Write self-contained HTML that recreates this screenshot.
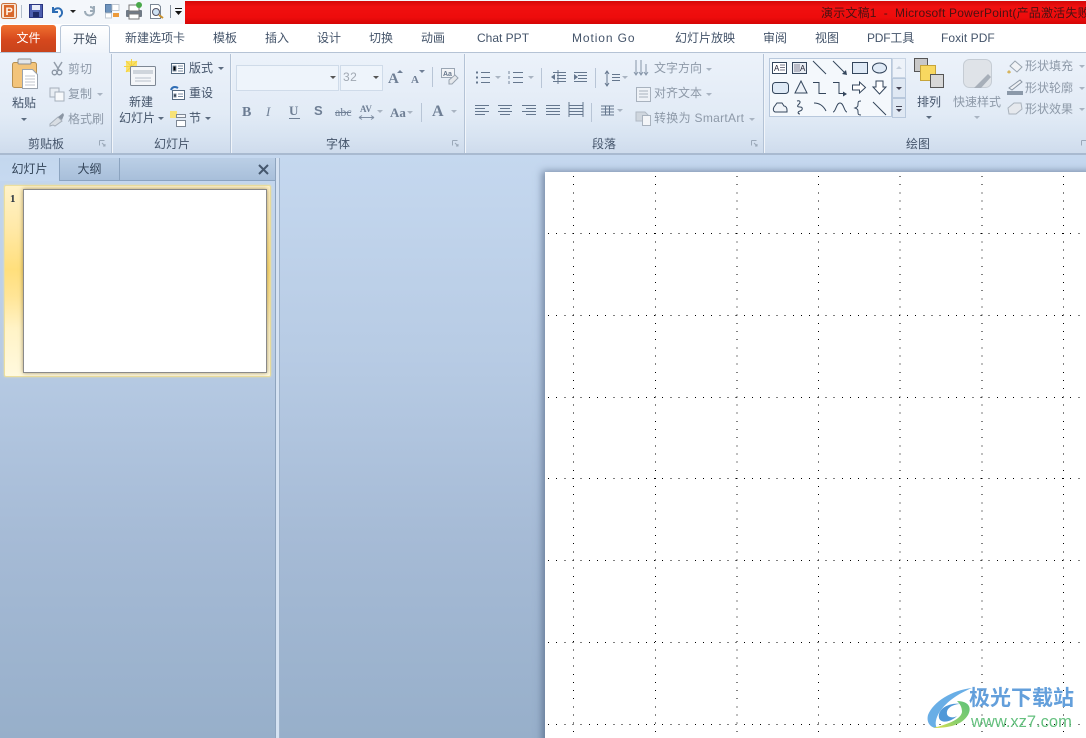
<!DOCTYPE html>
<html><head><meta charset="utf-8"><style>
html,body{margin:0;padding:0;width:1086px;height:738px;overflow:hidden;background:#fff}
body{position:relative;font-family:"Liberation Sans","Noto Sans CJK SC",sans-serif;font-size:12px;color:#3c4a5c}
.a{position:absolute}
.t{position:absolute;white-space:nowrap;line-height:16px;height:16px}
.tab{position:absolute;top:30px;white-space:nowrap;line-height:16px;color:#44546a;font-size:12px}
.g{color:#8d99a8}
.d{color:#44546a}
.sep{position:absolute;top:54px;height:99px;width:1px;background:#b4c3d6;box-shadow:1px 0 0 #f1f5fa}
.gl{position:absolute;top:136px;line-height:16px;color:#44546a;font-size:12px;white-space:nowrap}
.ar{position:absolute;width:0;height:0;border-left:3px solid transparent;border-right:3px solid transparent;border-top:3px solid #5c6c80}
.ar.l{border-top-color:#a9b4c2}
svg{position:absolute;overflow:visible}
</style></head><body>
<!-- quick access -->
<div class="a" style="left:0;top:0;width:1086px;height:24px;background:#f4f7fb"></div>
<div class="a" style="left:185px;top:1px;width:901px;height:23px;background:linear-gradient(#d40808 0,#f01010 25%,#ee0c0c 70%,#d50606 100%)"></div>
<div class="t" style="left:821px;top:5px;color:#4a1212;font-size:12px;letter-spacing:.2px">演示文稿1 &nbsp;-&nbsp; Microsoft PowerPoint(产品激活失败)</div>
<svg style="left:0;top:0" width="185" height="24">
<rect x="1.5" y="3.5" width="15" height="15" rx="2" fill="#f8e3d2" stroke="#c9703c"/><rect x="4" y="5" width="10" height="12" fill="#d9682c"/>
<text x="5.5" y="15" font-family="Liberation Sans" font-weight="bold" font-size="11" fill="#fff3e6">P</text>
<line x1="21.5" y1="5" x2="21.5" y2="18" stroke="#b4bfcc"/>
<rect x="29.5" y="4.5" width="13" height="13" fill="#4d5fb0" stroke="#2a3580"/><rect x="32" y="5" width="8" height="5" fill="#e8ecf8"/><rect x="33" y="12" width="6" height="5" fill="#1e2a68"/>
<path d="M53 7v5h5M53 12c2-5 8-5 9 0c.4 2-1 4-3 5" fill="none" stroke="#2c6cb4" stroke-width="2"/>
<path d="M70 10h6l-3 3z" fill="#222"/>
<path d="M94 6v5h-4M85 11c0 6 9 6 9 0c0-3-2-4-4-4" fill="none" stroke="#9cabb8" stroke-width="2"/>
<rect x="105.5" y="4.5" width="6" height="8" fill="#6d93bd" stroke="#5577a0"/><rect x="105.5" y="13" width="6" height="5" fill="#fff" stroke="#c0c8d2"/><rect x="112" y="4.500" width="7" height="6" fill="#fff" stroke="#c0c8d2"/><rect x="113" y="13" width="6" height="4" fill="#ec9a3a"/>
<rect x="126" y="10" width="16" height="7" rx="1" fill="#707a86"/><rect x="129" y="5" width="10" height="6" fill="#fff" stroke="#777"/><rect x="129" y="14" width="10" height="5" fill="#fff" stroke="#777"/><circle cx="139" cy="5" r="3" fill="#4aa84a"/>
<path d="M150.500 4.500h8l2 2v12h-10z" fill="#fff" stroke="#7a8694"/><circle cx="156" cy="12" r="3.500" fill="#cfe2f3" stroke="#556"/><line x1="159" y1="15" x2="163" y2="18" stroke="#c8912e" stroke-width="2"/>
<line x1="170.500" y1="5" x2="170.500" y2="18" stroke="#8894a2"/>
<rect x="175" y="8" width="7" height="1" fill="#111"/><path d="M175 11h7l-3.500 4z" fill="#111"/>
</svg>
<!-- tab row -->
<div class="a" style="left:0;top:24px;width:1086px;height:28px;background:#fff"></div>
<div class="a" style="left:1px;top:25px;width:55px;height:27px;border-radius:3px 3px 0 0;background:linear-gradient(#f0702f,#d6481d 55%,#c8431c);text-align:center;line-height:27px;color:#fff;font-size:12px">文件</div>
<div class="a" style="left:0;top:52px;width:1086px;height:102px;background:linear-gradient(#ecf2fa,#e2ebf6 60%,#d7e3f1 84%,#cedbec);border-top:1px solid #b5c3d5;box-sizing:border-box"></div>
<div class="a" style="left:60px;top:25px;width:50px;height:28px;box-sizing:border-box;border:1px solid #b8c6d8;border-bottom:none;border-radius:3px 3px 0 0;background:linear-gradient(#fff,#eef3fa);text-align:center;line-height:26px;color:#3c4a5c;font-size:12px">开始</div>
<div class="tab" style="left:125px">新建选项卡</div><div class="tab" style="left:213px">模板</div><div class="tab" style="left:265px">插入</div><div class="tab" style="left:317px">设计</div><div class="tab" style="left:369px">切换</div><div class="tab" style="left:421px">动画</div>
<div class="tab" style="left:477px">Chat PPT</div><div class="tab" style="left:572px;letter-spacing:.9px">Motion Go</div>
<div class="tab" style="left:675px">幻灯片放映</div><div class="tab" style="left:763px">审阅</div><div class="tab" style="left:815px">视图</div><div class="tab" style="left:867px;letter-spacing:-.2px">PDF工具</div><div class="tab" style="left:941px;letter-spacing:.05px">Foxit PDF</div>
<!-- separators -->
<div class="sep" style="left:111px"></div><div class="sep" style="left:230px"></div><div class="sep" style="left:464px"></div><div class="sep" style="left:763px"></div>
<div class="a" style="left:0;top:153px;width:1086px;height:2px;background:#a9bad0"></div>
<!-- group labels -->
<div class="gl" style="left:28px">剪贴板</div><div class="gl" style="left:154px">幻灯片</div><div class="gl" style="left:326px">字体</div><div class="gl" style="left:592px">段落</div><div class="gl" style="left:906px">绘图</div>
<svg style="left:0;top:0" width="1086" height="154" fill="none" stroke="#9aa8b8">
<path d="M99.500 140.500h5M99.500 140.500v5M102 143l3 3M105 144v2h-2"/><path d="M452.500 140.500h5M452.500 140.500v5M455 143l3 3M458 144v2h-2"/><path d="M751.500 140.500h5M751.500 140.500v5M754 143l3 3M757 144v2h-2"/><path d="M1081.500 140.500h5M1081.500 140.500v5"/>
</svg>
<!-- clipboard -->
<svg style="left:0;top:0" width="111" height="154">
<rect x="12.500" y="62.500" width="24" height="25" rx="2" fill="#f3c47a" stroke="#b89050"/><rect x="18" y="59" width="13" height="5" rx="1" fill="#e3e6ea" stroke="#8d8e90"/>
<path d="M22.500 69.500h10l5 5v14h-15z" fill="#fff" stroke="#9aa3ae"/><path d="M25 76h10M25 79h10M25 82h10M25 85h10" stroke="#c0c6ce"/>
<path d="M54 62l5 8M62 62l-5 8" stroke="#939daa" stroke-width="1.500" fill="none"/><circle cx="54.500" cy="72.500" r="2.300" fill="none" stroke="#8a95a3" stroke-width="1.300"/><circle cx="59.500" cy="72.500" r="2.300" fill="none" stroke="#8a95a3" stroke-width="1.300"/>
<rect x="50" y="88" width="9" height="9" fill="#e8edf3" stroke="#a5afbb"/><rect x="55" y="92" width="9" height="9" fill="#f7f9fb" stroke="#a5afbb"/>
<path d="M50 124l8-7 4 4-7 5-2-1-3 1z" fill="#d9dee4" stroke="#a6afba"/><path d="M58 117l5-4 1 2-2 5z" fill="#8b96a4"/>
</svg>
<div class="t d" style="left:12px;top:95px">粘贴</div><div class="ar" style="left:21px;top:118px"></div>
<div class="t g" style="left:68px;top:61px">剪切</div><div class="t g" style="left:68px;top:86px">复制</div><div class="ar l" style="left:97px;top:93px"></div><div class="t g" style="left:68px;top:111px">格式刷</div>
<!-- slides -->
<svg style="left:0;top:0" width="240" height="154">
<path d="M126 61h11v11h-11z" fill="#f8e06c"/><path d="M131.500 59v15M124 66.500h15M126 61l11 11M137 61l-11 11" stroke="#f5d33e"/>
<rect x="130.500" y="66.500" width="25" height="19" rx="1" fill="#f4f6f9" stroke="#7d8794"/><rect x="133" y="70" width="20" height="4" fill="#cfd5dc"/><path d="M135 78h16M135 81h16" stroke="#b8c0ca"/>
<rect x="171.500" y="63.500" width="13" height="10" fill="#fff" stroke="#556a80"/><path d="M173 66h3v5h-3zM178 66h5M178 68.500h5M178 71h5" stroke="#7b8ea3"/>
<rect x="172.500" y="90.500" width="12" height="9" fill="#fff" stroke="#556a80"/><path d="M178 94h5M178 96.500h5M174 94h2v3h-2z" stroke="#7b8ea3"/><path d="M171 90c1-3 4-4 7-2" stroke="#2f6db5" stroke-width="2" fill="none"/>
<path d="M170 111h7v7h-7z" fill="#f7e278"/><rect x="176.500" y="114.500" width="9" height="3" fill="#f4f6f9" stroke="#7d8794"/><rect x="176.500" y="120.500" width="9" height="6" fill="#fff" stroke="#7d8794"/>
</svg>
<div class="t d" style="left:129px;top:94px">新建</div><div class="t d" style="left:119px;top:110px">幻灯片</div><div class="ar" style="left:158px;top:117px"></div>
<div class="t d" style="left:189px;top:60px">版式</div><div class="ar" style="left:218px;top:67px"></div><div class="t d" style="left:189px;top:85px">重设</div><div class="t d" style="left:189px;top:110px">节</div><div class="ar" style="left:205px;top:117px"></div>
<!-- font -->
<div class="a" style="left:236px;top:65px;width:103px;height:26px;box-sizing:border-box;background:#eef4fb;border:1px solid #cfdbe9"></div>
<div class="a" style="left:340px;top:65px;width:43px;height:26px;box-sizing:border-box;background:#eef4fb;border:1px solid #cfdbe9"></div>
<div class="ar" style="left:330px;top:76px;border-top-color:#555"></div><div class="ar" style="left:373px;top:76px;border-top-color:#555"></div>
<div class="t" style="left:343px;top:69px;color:#a0a8b2;font-size:12px;letter-spacing:.5px">32</div>
<svg style="left:0;top:0" width="470" height="154" font-family="Liberation Serif" font-weight="bold" fill="#6f7f95">
<text x="388" y="83" font-size="15">A</text><path d="M397 73l3-3 3 3z"/><text x="411" y="83" font-size="11">A</text><path d="M419 70h6l-3 3z"/>
<line x1="432.500" y1="67" x2="432.500" y2="87" stroke="#b8c5d6"/>
<rect x="441.500" y="68.500" width="13" height="9" fill="#f2f4f7" stroke="#9aa6b4"/><text x="443" y="76" font-size="7" font-family="Liberation Sans" fill="#66778c">Aa</text><path d="M449 80l6-5 3 3-6 6h-3z" fill="#e5e8ec" stroke="#98a3b0"/>
<text x="242" y="116" font-size="14" fill="#6b7c93">B</text><text x="266" y="116" font-size="13" font-style="italic" font-weight="normal">I</text><text x="289" y="115" font-size="13" font-weight="bold">U</text><line x1="289" y1="118.500" x2="300" y2="118.500" stroke="#6f7f95"/>
<text x="314" y="115" font-size="13" font-family="Liberation Sans">S</text>
<text x="335" y="116" font-size="12" font-weight="normal">abc</text><line x1="335" y1="112.500" x2="351" y2="112.500" stroke="#6f7f95"/>
<text x="360" y="112" font-size="9">AV</text><path d="M359 117.500h15M359 117.500l3-2M359 117.500l3 2M374 117.500l-3-2M374 117.500l-3 2" stroke="#7f8ea3" fill="none"/>
<text x="390" y="117" font-size="13">Aa</text>
<line x1="421.500" y1="103" x2="421.500" y2="122" stroke="#b8c5d6"/>
<text x="432" y="116" font-size="16">A</text>
</svg>
<div class="ar l" style="left:377px;top:110px"></div><div class="ar l" style="left:407px;top:111px"></div><div class="ar l" style="left:451px;top:110px"></div>
<!-- paragraph -->
<svg style="left:0;top:0" width="760" height="154" stroke="#65778e" fill="none">
<path d="M481 72.500h9M481 77.500h9M481 82.500h9"/><path d="M476 72.500h2M476 77.500h2M476 82.500h2" stroke-width="2"/>
<path d="M513 72.500h10M513 77.500h10M513 82.500h10"/><path d="M509 71v3M509 76v3M509 81v3" stroke="#75869c"/>
<line x1="541.500" y1="68" x2="541.500" y2="88" stroke="#b8c5d6"/>
<path d="M553 72.500h13M557 75.500h9M557 78.500h9M553 81.500h13M558 70v14"/><path d="M551 77l4-3v6z" fill="#65778e" stroke="none"/>
<path d="M574 72.500h13M578 75.500h9M578 78.500h9M574 81.500h13"/><path d="M578 77l-4-3v6z" fill="#65778e" stroke="none"/>
<line x1="595.500" y1="68" x2="595.500" y2="88" stroke="#b8c5d6"/>
<path d="M612 74.500h8M612 77.500h8M612 80.500h8M607 72v13M605 74l2-3 2 3M605 83l2 3 2-3"/>
<path d="M475 105.500h14M475 108.500h10M475 111.500h14M475 114.500h10"/>
<path d="M498 105.500h14M500 108.500h10M498 111.500h14M500 114.500h10"/>
<path d="M522 105.500h14M526 108.500h10M522 111.500h14M526 114.500h10"/>
<path d="M546 105.500h14M546 108.500h14M546 111.500h14M546 114.500h14"/>
<path d="M569 105.500h14M569 108.500h14M569 111.500h14M569 114.500h14M569 102v15M583 102v15"/>
<line x1="591.500" y1="103" x2="591.500" y2="122" stroke="#b8c5d6"/>
<path d="M601 106h13M601 109h13M601 112h13M601 115h13M605.500 106v9M609.500 106v9"/>
<path d="M636 60v15M641 60v15M646 64v11M634 72l2 3 2-3M639 72l2 3 2-3M644 72l2 3 2-3" stroke="#8595a8"/>
<rect x="636.500" y="87.500" width="14" height="14" fill="#eef2f7" stroke="#a8b2be"/><path d="M639 91h9M639 94h9M639 97h9" stroke="#a8b2be"/>
<path d="M636 112h9l4 4v5h-13z" fill="#cfd6de" stroke="#b0b9c4"/><rect x="642.500" y="115.500" width="8" height="10" fill="#f3f5f8" stroke="#a8b2be"/>
</svg>
<div class="ar l" style="left:495px;top:76px"></div><div class="ar l" style="left:528px;top:76px"></div><div class="ar l" style="left:622px;top:76px"></div><div class="ar l" style="left:617px;top:109px"></div>
<div class="t g" style="left:654px;top:60px">文字方向</div><div class="ar l" style="left:706px;top:68px"></div>
<div class="t g" style="left:654px;top:85px">对齐文本</div><div class="ar l" style="left:706px;top:93px"></div>
<div class="t g" style="left:654px;top:110px;letter-spacing:.3px">转换为 SmartArt</div><div class="ar l" style="left:749px;top:118px"></div>
<!-- shapes gallery -->
<div class="a" style="left:769px;top:58px;width:123px;height:59px;box-sizing:border-box;background:#f4f8fc;border:1px solid #b8c8dc"></div>
<div class="a" style="left:892px;top:58px;width:14px;height:20px;box-sizing:border-box;background:#edf2f9;border:1px solid #c9d5e4"></div>
<div class="a" style="left:892px;top:78px;width:14px;height:20px;box-sizing:border-box;background:#dfe8f3;border:1px solid #b8c8dc"></div>
<div class="a" style="left:892px;top:98px;width:14px;height:20px;box-sizing:border-box;background:#dfe8f3;border:1px solid #b8c8dc"></div>
<svg style="left:0;top:0" width="1086" height="154" fill="none" stroke="#34465c">
<path d="M896 69l3-3 3 3z" fill="#c4cedb" stroke="none"/><path d="M896 87h6l-3 3z" fill="#445" stroke="none"/><path d="M896 106.500h6" stroke="#445"/><path d="M896 109h6l-3 3z" fill="#445" stroke="none"/>
<rect x="772.500" y="62.500" width="14" height="11" fill="#fff"/><path d="M780 65h5M780 67.500h5M780 70h5" stroke="#778"/><text x="774" y="71" font-size="8" font-family="Liberation Sans" fill="#223" stroke="none">A</text>
<rect x="792.500" y="62.500" width="14" height="11" fill="#e8edf3"/><path d="M795 64v8M797 64v8M799 64v8" stroke="#889"/><text x="800" y="71" font-size="8" font-family="Liberation Sans" fill="#223" stroke="none">A</text>
<path d="M813 61l13 13"/><path d="M833 61l12 12"/><path d="M847 75l-5-1 4-4z" fill="#34465c" stroke="none"/>
<rect x="852.500" y="62.500" width="15" height="11" fill="#dfeaf6"/><ellipse cx="879.500" cy="68" rx="7" ry="5" fill="#dfeaf6"/>
<rect x="772.500" y="82.500" width="16" height="11" rx="3" fill="#dfeaf6"/><path d="M801 81l6 12h-12z" fill="#edf2f8"/>
<path d="M813 82.500h6v11h7"/><path d="M833 82.500h6v11h6"/><path d="M847 94l-4-2.500v5z" fill="#34465c" stroke="none"/>
<path d="M852.500 85h7v-3l6 5.500-6 5.500v-3h-7z" fill="#fff"/><path d="M876 81h7v6h3l-6.500 7-6.500-7h3z" fill="#fff"/>
<path d="M774 107l3-4h5l2 3c2 0 3 2 3 4v2h-12c-2-1-2-3-1-5z" fill="#f0f4f9"/>
<path d="M797 101c3-1 4 1 2 3s-2 3 1 3 3 3 0 4-2 3 0 3"/><path d="M814 103c5 0 9 2 12 8"/><path d="M833 112c3 0 3-9 7-9s4 9 7 9"/><path d="M861 101c-3 0-3 1-3 3s0 3-3 4c3 1 3 2 3 4s0 3 3 3"/><path d="M873 102l13 13"/>
</svg>
<!-- arrange -->
<svg style="left:0;top:0" width="1086" height="154">
<rect x="914.500" y="58.500" width="13" height="13" fill="#c8c8c8" stroke="#555"/><rect x="920.500" y="65.500" width="15" height="15" fill="#f8d860" stroke="#c6a43a"/><rect x="930.500" y="74.500" width="13" height="13" fill="#d8d8d8" stroke="#555"/>
<rect x="963.500" y="59.500" width="28" height="28" rx="6" fill="#dfe3e8" stroke="#c5ccd4"/><path d="M974 88l14-14 3 3-10 11z" fill="#a7afb9"/>
<path d="M1010 66l5-5 7 6-5 5z" fill="#f1f3f6" stroke="#98a3ae"/><path d="M1009 70l-2 2c1 2 3 2 4 0z" fill="#d6b45c"/>
<path d="M1009 88l11-8 2 2-10 8z" fill="#eef1f5" stroke="#8a96a4"/><rect x="1007" y="91" width="16" height="4" fill="#8b99a9"/>
<path d="M1008 108l6-5h7l1 6-6 5h-7z" fill="#e6e9ee" stroke="#aab3bd"/>
</svg>
<div class="t d" style="left:917px;top:94px">排列</div><div class="ar" style="left:926px;top:116px"></div>
<div class="t g" style="left:953px;top:94px">快速样式</div><div class="ar l" style="left:974px;top:116px"></div>
<div class="t g" style="left:1025px;top:58px">形状填充</div><div class="ar l" style="left:1079px;top:65px"></div>
<div class="t g" style="left:1025px;top:80px">形状轮廓</div><div class="ar l" style="left:1079px;top:87px"></div>
<div class="t g" style="left:1025px;top:101px">形状效果</div><div class="ar l" style="left:1079px;top:108px"></div>
<!-- workspace -->
<div class="a" style="left:0;top:155px;width:1086px;height:583px;background:linear-gradient(#c5d8ef,#b7cbe4 35%,#a6bbd6 65%,#97afca)"></div>
<div class="a" style="left:275px;top:158px;width:5px;height:580px;background:#d5e2f2;border-left:1px solid #8ea4be;border-right:1px solid #a0b4cc;box-sizing:border-box"></div>
<!-- pane tabs -->
<div class="a" style="left:0;top:158px;width:275px;height:23px;background:linear-gradient(#bbcfe6,#a8bfda);border-bottom:1px solid #8ca4c0;box-sizing:border-box"></div>
<div class="a" style="left:0;top:158px;width:60px;height:23px;background:linear-gradient(#c3d7ee,#c6d9f0);border-right:1px solid #8ca4c0;box-sizing:border-box;text-align:center;line-height:22px;color:#334458">幻灯片</div>
<div class="a" style="left:60px;top:158px;width:60px;height:23px;border-right:1px solid #8ca4c0;box-sizing:border-box;text-align:center;line-height:22px;color:#334458">大纲</div>
<svg style="left:258px;top:164px" width="11" height="11"><path d="M1 1l9 9M10 1l-9 9" stroke="#46586e" stroke-width="2"/></svg>
<!-- thumb -->
<div class="a" style="left:4px;top:185px;width:267px;height:192px;box-sizing:border-box;border:1px solid #ecdf9e;border-radius:2px;background:linear-gradient(#fff2c8,#ffe9a8 22%,#ffdf7c 44%,#ffe596 58%,#fff3c6 75%,#fff9de);box-shadow:0 0 2px #e8e0b0"></div>
<div class="t" style="left:10px;top:191px;font-family:'Liberation Serif';font-weight:bold;font-size:11px;color:#2a3440">1</div>
<div class="a" style="left:23px;top:189px;width:244px;height:184px;box-sizing:border-box;background:#fff;border:1px solid #8a8a8a;box-shadow:0 0 4px rgba(90,70,20,.55)"></div>
<!-- slide -->
<div class="a" style="left:545px;top:172px;width:560px;height:580px;background:#fff;box-shadow:-3px -1px 7px rgba(70,90,120,.6)"></div>
<svg style="left:545px;top:172px" width="541" height="566" shape-rendering="crispEdges" stroke="#000">
<g stroke-dasharray="1 7.160" stroke-width="1">
<line x1="28.500" y1="4" x2="28.500" y2="566"/><line x1="110.500" y1="4" x2="110.500" y2="566"/><line x1="192" y1="4" x2="192" y2="566"/><line x1="273.500" y1="4" x2="273.500" y2="566"/><line x1="355" y1="4" x2="355" y2="566"/><line x1="437" y1="4" x2="437" y2="566"/><line x1="518.500" y1="4" x2="518.500" y2="566"/>
<line x1="3" y1="61.500" x2="541" y2="61.500"/><line x1="3" y1="143.500" x2="541" y2="143.500"/><line x1="3" y1="225.500" x2="541" y2="225.500"/><line x1="3" y1="306.500" x2="541" y2="306.500"/><line x1="3" y1="388.500" x2="541" y2="388.500"/><line x1="3" y1="470.500" x2="541" y2="470.500"/><line x1="3" y1="552.500" x2="541" y2="552.500"/>
</g></svg>
<!-- watermark -->
<svg style="left:927px;top:688px" width="46" height="42">
<defs><linearGradient id="wg" x1="1" y1="0" x2="0" y2="1"><stop offset="0" stop-color="#5fc27a"/><stop offset=".6" stop-color="#8fd06a"/><stop offset="1" stop-color="#e6e24a"/></linearGradient></defs>
<path d="M45 0C25 2 6 14 1 27c-2 8 3 13 9 13C5 32 15 12 45 0z" fill="#69aee6"/>
<path d="M12 30C10 20 24 14 34 16C26 16 19 20 20 26C21 30 27 30 30 28C24 34 14 36 12 30z" fill="#4f98d8"/>
<path d="M30 13C42 13 45 20 41 27C35 37 22 40 6 40C22 36 34 31 35 24C35 19 33 16 30 13z" fill="url(#wg)"/>
</svg>
<div class="t" style="left:969px;top:687px;height:24px;line-height:24px;font-size:21px;font-weight:bold;color:#639fdb">极光下载站</div>
<div class="t" style="left:971px;top:714px;font-size:16.500px;color:#64c07e">www.xz7.com</div>
</body></html>
